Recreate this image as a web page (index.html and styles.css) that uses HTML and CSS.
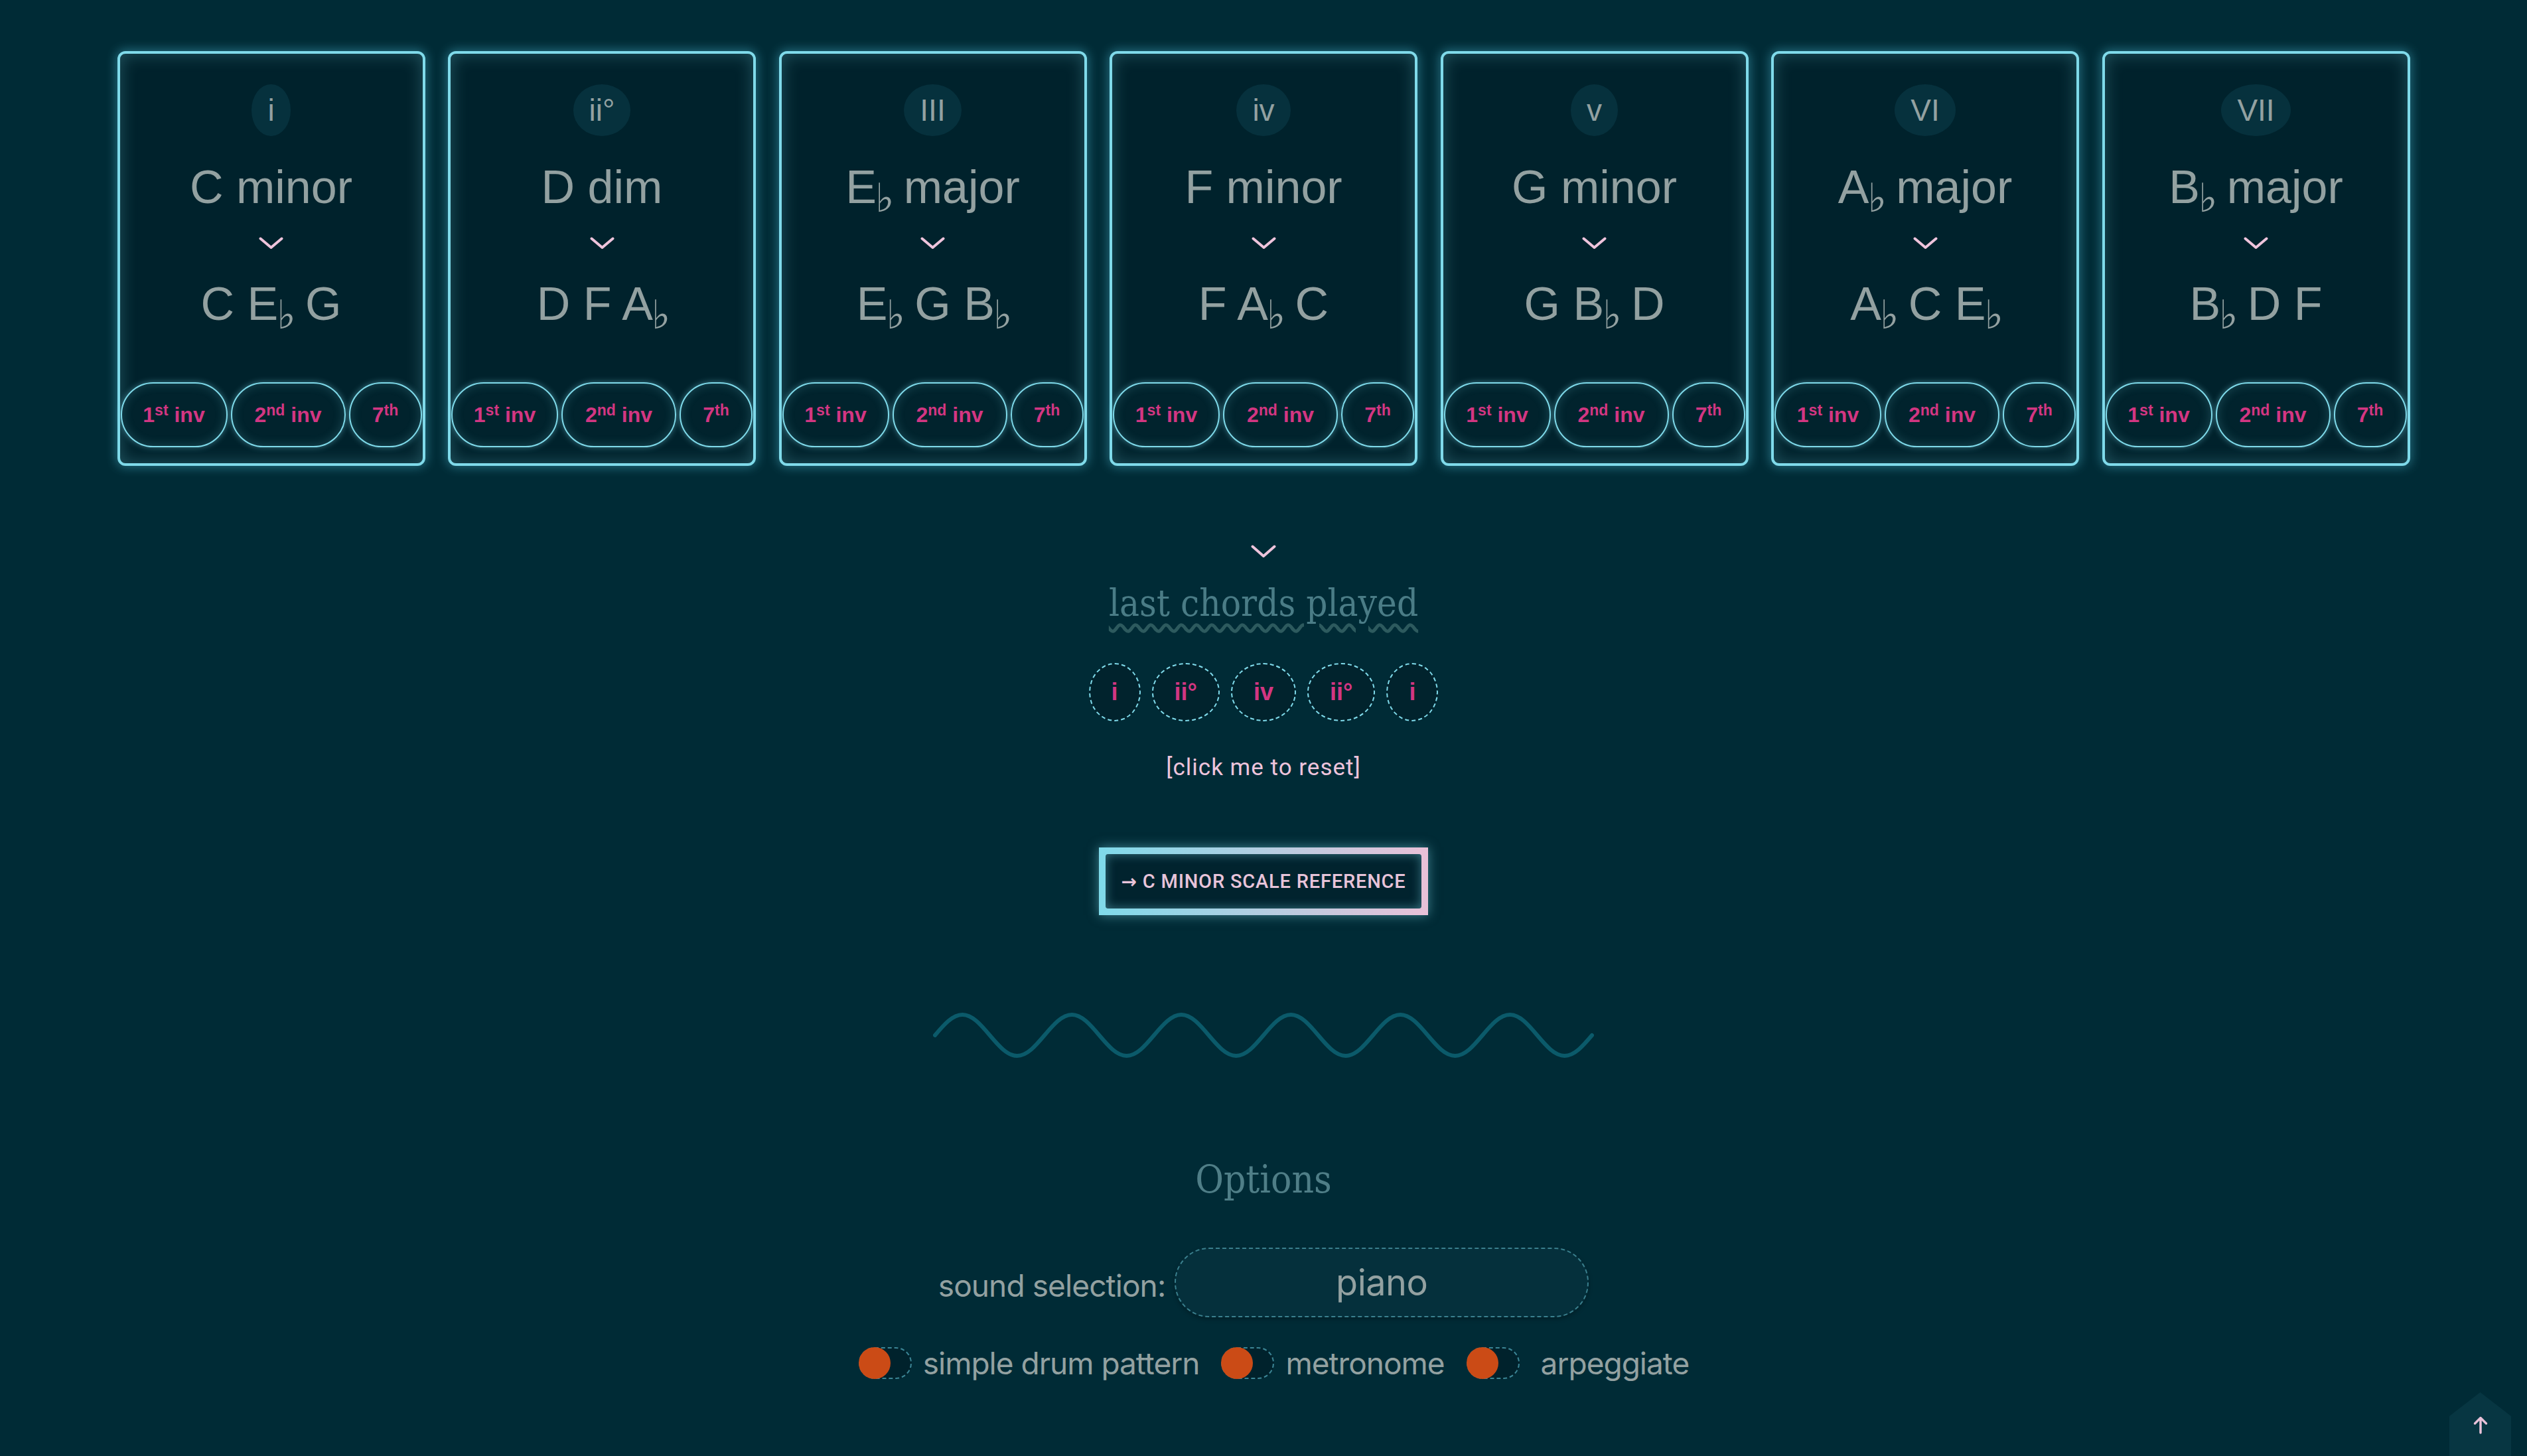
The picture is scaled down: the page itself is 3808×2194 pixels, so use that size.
FILE: index.html
```html
<!DOCTYPE html>
<html lang="en">
<head>
<meta charset="utf-8">
<title>C minor chords</title>
<link rel="stylesheet" href="styles.css">
</head>
<body>
<main class="page">
  <div class="cards">
    <section class="card">
      <div class="numeral">i</div>
      <div class="chord-name">C minor</div>
      <svg class="chev" viewBox="0 0 37 19"><polyline points="2.5,2.5 18.5,16 34.5,2.5"/></svg>
      <div class="notes">C E<span class="flat">♭</span> G</div>
      <div class="invs"><button class="inv inv-1">1<sup>st</sup> inv</button><button class="inv inv-2">2<sup>nd</sup> inv</button><button class="inv inv-7">7<sup>th</sup></button></div>
    </section>
    <section class="card">
      <div class="numeral">ii°</div>
      <div class="chord-name">D dim</div>
      <svg class="chev" viewBox="0 0 37 19"><polyline points="2.5,2.5 18.5,16 34.5,2.5"/></svg>
      <div class="notes">D F A<span class="flat">♭</span></div>
      <div class="invs"><button class="inv inv-1">1<sup>st</sup> inv</button><button class="inv inv-2">2<sup>nd</sup> inv</button><button class="inv inv-7">7<sup>th</sup></button></div>
    </section>
    <section class="card">
      <div class="numeral">III</div>
      <div class="chord-name">E<span class="flat">♭</span> major</div>
      <svg class="chev" viewBox="0 0 37 19"><polyline points="2.5,2.5 18.5,16 34.5,2.5"/></svg>
      <div class="notes">E<span class="flat">♭</span> G B<span class="flat">♭</span></div>
      <div class="invs"><button class="inv inv-1">1<sup>st</sup> inv</button><button class="inv inv-2">2<sup>nd</sup> inv</button><button class="inv inv-7">7<sup>th</sup></button></div>
    </section>
    <section class="card">
      <div class="numeral">iv</div>
      <div class="chord-name">F minor</div>
      <svg class="chev" viewBox="0 0 37 19"><polyline points="2.5,2.5 18.5,16 34.5,2.5"/></svg>
      <div class="notes">F A<span class="flat">♭</span> C</div>
      <div class="invs"><button class="inv inv-1">1<sup>st</sup> inv</button><button class="inv inv-2">2<sup>nd</sup> inv</button><button class="inv inv-7">7<sup>th</sup></button></div>
    </section>
    <section class="card">
      <div class="numeral">v</div>
      <div class="chord-name">G minor</div>
      <svg class="chev" viewBox="0 0 37 19"><polyline points="2.5,2.5 18.5,16 34.5,2.5"/></svg>
      <div class="notes">G B<span class="flat">♭</span> D</div>
      <div class="invs"><button class="inv inv-1">1<sup>st</sup> inv</button><button class="inv inv-2">2<sup>nd</sup> inv</button><button class="inv inv-7">7<sup>th</sup></button></div>
    </section>
    <section class="card">
      <div class="numeral">VI</div>
      <div class="chord-name">A<span class="flat">♭</span> major</div>
      <svg class="chev" viewBox="0 0 37 19"><polyline points="2.5,2.5 18.5,16 34.5,2.5"/></svg>
      <div class="notes">A<span class="flat">♭</span> C E<span class="flat">♭</span></div>
      <div class="invs"><button class="inv inv-1">1<sup>st</sup> inv</button><button class="inv inv-2">2<sup>nd</sup> inv</button><button class="inv inv-7">7<sup>th</sup></button></div>
    </section>
    <section class="card">
      <div class="numeral">VII</div>
      <div class="chord-name">B<span class="flat">♭</span> major</div>
      <svg class="chev" viewBox="0 0 37 19"><polyline points="2.5,2.5 18.5,16 34.5,2.5"/></svg>
      <div class="notes">B<span class="flat">♭</span> D F</div>
      <div class="invs"><button class="inv inv-1">1<sup>st</sup> inv</button><button class="inv inv-2">2<sup>nd</sup> inv</button><button class="inv inv-7">7<sup>th</sup></button></div>
    </section>
  </div>

  <svg class="chev chev-lg" viewBox="0 0 38 20"><polyline points="2.5,2.5 19,17 35.5,2.5"/></svg>
  <h2 class="history-title">last chords played</h2>
  <div class="history">
    <span class="past">i</span>
    <span class="past">ii°</span>
    <span class="past">iv</span>
    <span class="past">ii°</span>
    <span class="past">i</span>
  </div>
  <div class="reset">[click me to reset]</div>

  <a class="scale-link" href="#"><span class="scale-link-inner"><span class="arrow">→</span> C minor scale reference</span></a>

  <svg class="wave" viewBox="0 0 996 76">
    <path d="M3,38 c13.45,-15.88 26.32,-31 41.25,-31 s27.8,15.12 41.25,31 s26.32,31 41.25,31 s27.8,-15.12 41.25,-31 s26.32,-31 41.25,-31 s27.8,15.12 41.25,31 s26.32,31 41.25,31 s27.8,-15.12 41.25,-31 s26.32,-31 41.25,-31 s27.8,15.12 41.25,31 s26.32,31 41.25,31 s27.8,-15.12 41.25,-31 s26.32,-31 41.25,-31 s27.8,15.12 41.25,31 s26.32,31 41.25,31 s27.8,-15.12 41.25,-31 s26.32,-31 41.25,-31 s27.8,15.12 41.25,31 s26.32,31 41.25,31 s27.8,-15.12 41.25,-31 s26.32,-31 41.25,-31 s27.8,15.12 41.25,31 s26.32,31 41.25,31 s27.8,-15.12 41.25,-31"/>
  </svg>

  <h2 class="options-title">Options</h2>
  <div class="sound-row">
    <span class="sound-label">sound selection:</span>
    <div class="select">piano</div>
  </div>
  <div class="toggles">
    <label class="opt"><span class="toggle"><span class="knob"></span></span><span class="opt-label">simple drum pattern</span></label>
    <label class="opt"><span class="toggle"><span class="knob"></span></span><span class="opt-label">metronome</span></label>
    <label class="opt opt-wide"><span class="toggle"><span class="knob"></span></span><span class="opt-label">arpeggiate</span></label>
  </div>
</main>
<a class="to-top" href="#"><svg viewBox="0 0 22 27"><path d="M11,25 V3 M2.5,11 L11,2.5 L19.5,11"/></svg></a>
</body>
</html>
```
FILE: styles.css
```css
html, body {
  margin: 0;
  padding: 0;
}
body {
  background: #002b36;
  color: #93a1a1;
  font-family: "Liberation Sans", Arial, sans-serif;
  height: 2194px;
  overflow: hidden;
}
.page {
  display: flex;
  flex-direction: column;
  align-items: center;
  padding-top: 77px;
}

/* chord cards */
.cards {
  display: flex;
  gap: 34.5px;
}
.card {
  box-sizing: border-box;
  width: 464px;
  height: 625px;
  border: 4px solid #7fdaea;
  border-radius: 12px;
  background: #00222c;
  box-shadow: 0 0 16px 2px rgba(80, 190, 215, 0.45), inset 0 0 26px rgba(127, 218, 234, 0.28);
  display: flex;
  flex-direction: column;
  align-items: center;
  padding: 0 1px 24px;
}
.numeral {
  margin-top: 46px;
  height: 78px;
  line-height: 78px;
  padding: 0 24px;
  border-radius: 50%;
  background: #06313d;
  font-size: 46px;
  color: #93a1a1;
}
.chord-name,
.notes {
  height: 70px;
  font-size: 70px;
  line-height: 70px;
  color: #93a1a1;
  white-space: nowrap;
}
.chord-name {
  margin-top: 42px;
}
.notes {
  margin-top: 47px;
}
.flat {
  font-family: "DejaVu Sans", sans-serif;
  font-size: 60px;
  line-height: 0;
  vertical-align: -0.22em;
  margin: 0 -5px 0 -2px;
}
.chev {
  flex: none;
  width: 37px;
  height: 19px;
  margin-top: 40px;
  fill: none;
  stroke: #eec4dc;
  stroke-width: 4;
  stroke-linecap: round;
  stroke-linejoin: round;
}
.invs {
  margin-top: auto;
  width: 100%;
  display: flex;
  justify-content: center;
  gap: 5px;
}
.inv {
  box-sizing: border-box;
  height: 98px;
  padding: 0;
  border: 2px solid #7fdaea;
  border-radius: 49px;
  background: #01232d;
  box-shadow: 0 0 10px rgba(127, 218, 234, 0.45), inset 0 0 16px rgba(127, 218, 234, 0.22);
  color: #d33682;
  font-family: "Liberation Sans", Arial, sans-serif;
  font-weight: bold;
  font-size: 32px;
  white-space: nowrap;
}
.inv sup {
  font-size: 0.72em;
  vertical-align: 0.42em;
  line-height: 0;
}
.inv-1 { width: 161px; }
.inv-2 { width: 173px; }
.inv-7 { width: 110px; }

/* history */
.chev-lg {
  width: 38px;
  height: 20px;
  margin-top: 119px;
}
.history-title {
  margin: 40px 0 0;
  font-family: "DejaVu Serif", "Liberation Serif", serif;
  font-stretch: condensed;
  font-weight: normal;
  font-size: 56px;
  line-height: 56px;
  color: #4a7c86;
  text-decoration: underline wavy #2d5a5e;
  text-decoration-thickness: 5px;
  text-underline-offset: 12px;
}
.history {
  margin-top: 62px;
  display: flex;
  gap: 17px;
}
.past {
  box-sizing: border-box;
  height: 88px;
  padding: 0 32px;
  border: 2px dashed #7fdaea;
  border-radius: 50%;
  background: #01232d;
  display: flex;
  align-items: center;
  justify-content: center;
  font-weight: bold;
  font-size: 36px;
  color: #d33682;
}
.reset {
  margin-top: 52px;
  font-family: Roboto, "Liberation Sans", sans-serif;
  font-size: 35px;
  line-height: 35px;
  letter-spacing: 1px;
  color: #eec4dc;
}

/* scale reference link */
.scale-link {
  margin-top: 103px;
  padding: 10px;
  background: linear-gradient(90deg, #7fdaea, #e9c1d8);
  box-shadow: 0 0 16px rgba(127, 218, 234, 0.5);
  text-decoration: none;
}
.scale-link-inner {
  display: block;
  height: 82px;
  line-height: 82px;
  padding: 0 24px;
  border-radius: 4px;
  background: #01232e;
  box-shadow: inset 0 0 16px rgba(127, 218, 234, 0.45);
  font-family: Roboto, "Liberation Sans", sans-serif;
  font-weight: 500;
  font-size: 29px;
  letter-spacing: 0.8px;
  text-transform: uppercase;
  color: #e8c4da;
  white-space: nowrap;
}
.arrow {
  font-family: "DejaVu Sans", sans-serif;
  font-weight: bold;
  font-size: 28px;
}

.wave {
  flex: none;
  margin-top: 143px;
  width: 996px;
  height: 76px;
  fill: none;
  stroke: #0b5a6a;
  stroke-width: 6;
  stroke-linecap: round;
}

/* options */
.options-title {
  margin: 150px 0 0;
  font-family: "DejaVu Serif", "Liberation Serif", serif;
  font-stretch: condensed;
  font-weight: normal;
  font-size: 58px;
  line-height: 58px;
  color: #4f7e87;
}
.sound-row {
  margin-top: 74px;
  display: flex;
  align-items: center;
  gap: 14px;
}
.sound-label {
  font-family: Inter, "Liberation Sans", sans-serif;
  font-size: 46px;
  letter-spacing: -0.9px;
  padding-top: 8px;
  color: #93a1a1;
}
.select {
  box-sizing: border-box;
  width: 624px;
  height: 105px;
  border: 2px dashed #3a7f8d;
  border-radius: 52px;
  background: #05303c;
  box-shadow: 0 3px 6px rgba(0, 0, 0, 0.25);
  display: flex;
  align-items: center;
  justify-content: center;
  font-family: Inter, "Liberation Sans", sans-serif;
  font-size: 54px;
  letter-spacing: -0.5px;
  color: #93a1a1;
}
.toggles {
  margin-top: 41px;
  display: flex;
  align-items: center;
  padding-left: 31px;
}
.opt {
  display: flex;
  align-items: center;
  gap: 17px;
}
.opt + .opt {
  margin-left: 33px;
}
.opt-wide {
  gap: 32px;
}
.toggle {
  position: relative;
  box-sizing: border-box;
  width: 80px;
  height: 48px;
  border: 2px dashed #3b8595;
  border-radius: 24px;
  background: #00222c;
}
.knob {
  position: absolute;
  left: -2px;
  top: -2px;
  width: 48px;
  height: 48px;
  border-radius: 50%;
  background: #cb4b16;
}
.opt-label {
  font-family: Inter, "Liberation Sans", sans-serif;
  font-size: 46px;
  letter-spacing: -1px;
  color: #93a1a1;
}

/* back to top */
.to-top {
  position: fixed;
  right: 24px;
  bottom: 0;
  width: 93px;
  height: 96px;
  background: #073642;
  clip-path: polygon(50% 0, 100% 37.5%, 100% 100%, 0 100%, 0 37.5%);
  display: flex;
  justify-content: center;
  align-items: flex-start;
  padding-top: 36px;
  box-sizing: border-box;
}
.to-top svg {
  width: 22px;
  height: 27px;
  fill: none;
  stroke: #e8c1d8;
  stroke-width: 3.5;
  stroke-linecap: round;
  stroke-linejoin: round;
}
```
